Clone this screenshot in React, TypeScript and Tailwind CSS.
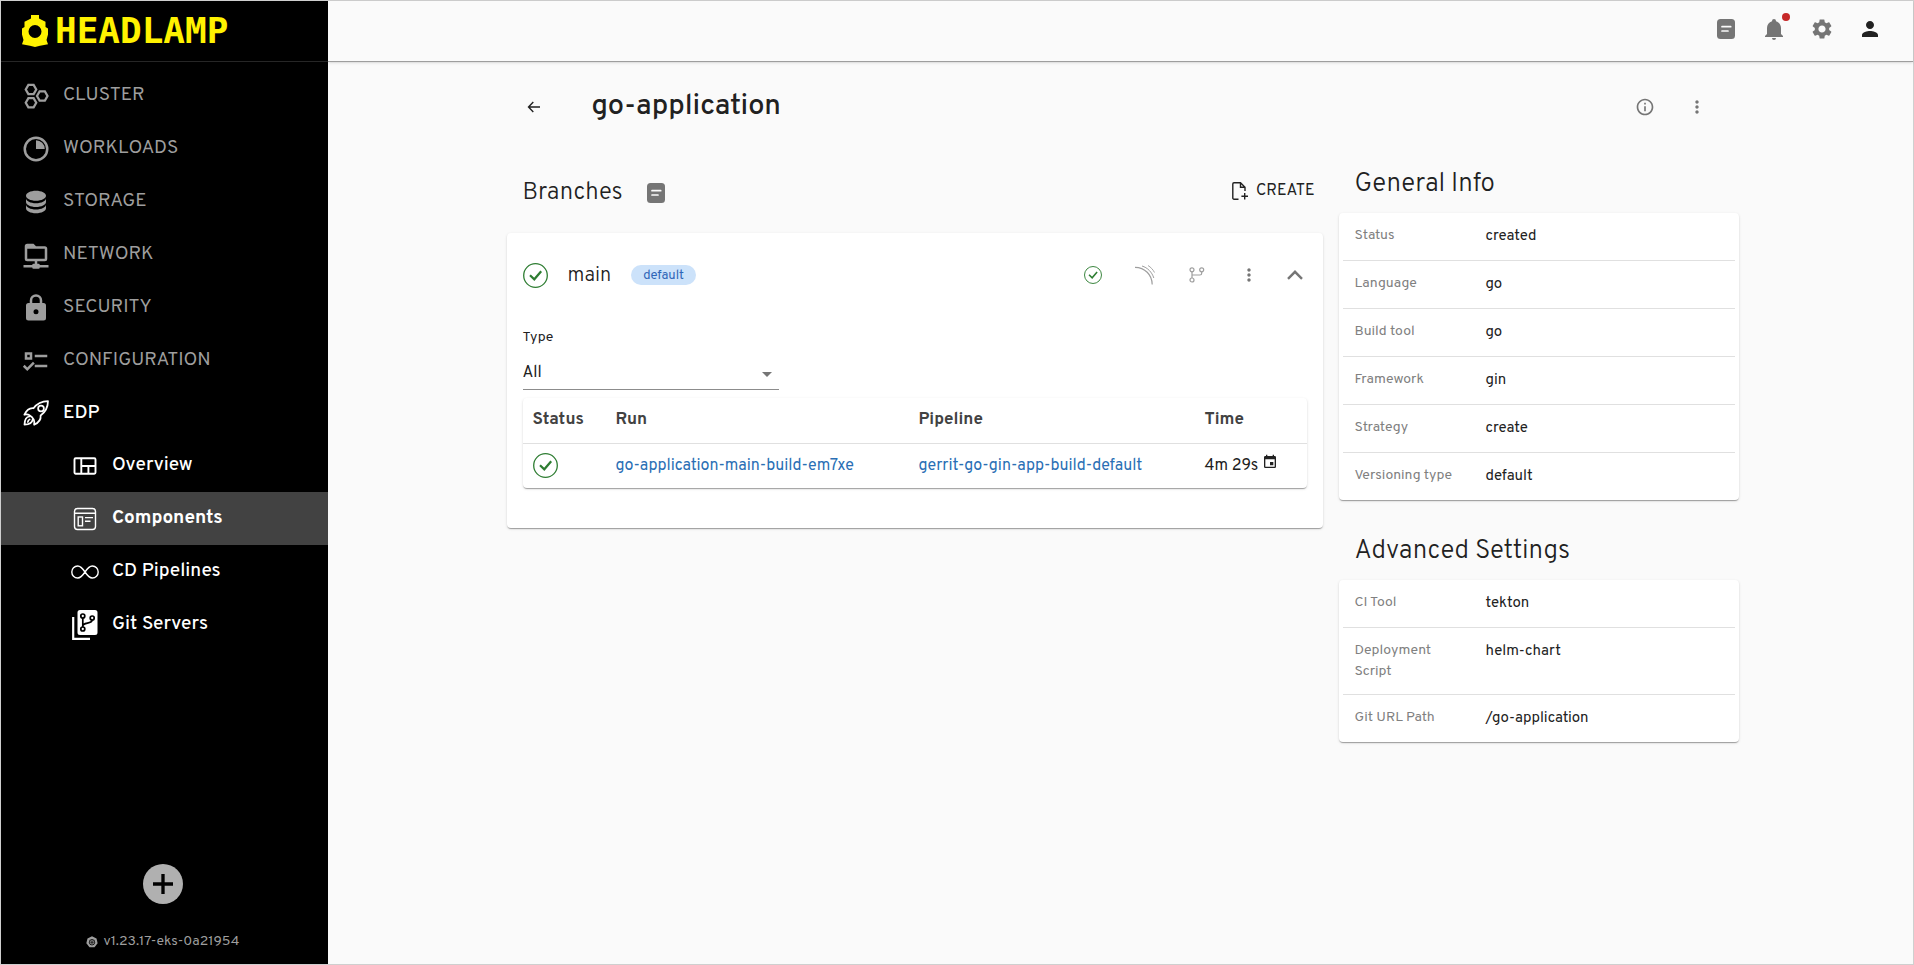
import type { ReactNode, SVGProps } from "react";
import { MdInfoOutline, MdMoreVert, MdPerson, MdSettings } from "react-icons/md";

type IconProps = SVGProps<SVGSVGElement>;

function Svg({ children, ...rest }: IconProps) {
  return (
    <svg viewBox="0 0 24 24" fill="currentColor" aria-hidden="true" {...rest}>
      {children}
    </svg>
  );
}

const HEX = "M-2.1-3.7H2.1L4.2 0 2.1 3.7H-2.1L-4.2 0Z";

const ClusterIcon = (p: IconProps) => (
  <Svg {...p}>
    <g fill="none" stroke="currentColor" strokeWidth="1.8">
      <path d={HEX} transform="translate(8 6.8)" />
      <path d={HEX} transform="translate(17 12)" />
      <path d={HEX} transform="translate(8 17.4)" />
    </g>
  </Svg>
);
const WorkloadsIcon = (p: IconProps) => (
  <Svg {...p}>
    <path d="M12 2A10 10 0 0 0 2 12 10 10 0 0 0 12 22 10 10 0 0 0 22 12 10 10 0 0 0 12 2M12 4a8 8 0 0 1 8 8 8 8 0 0 1-8 8 8 8 0 0 1-8-8 8 8 0 0 1 8-8m0 1v7h7a7 7 0 0 0-7-7z" />
  </Svg>
);
const StorageIcon = (p: IconProps) => (
  <Svg {...p}>
    <path d="M12 3C7.58 3 4 4.79 4 7s3.58 4 8 4 8-1.79 8-4-3.58-4-8-4M4 9v3c0 2.21 3.58 4 8 4s8-1.79 8-4V9c0 2.21-3.58 4-8 4s-8-1.79-8-4m0 5v3c0 2.21 3.58 4 8 4s8-1.79 8-4v-3c0 2.21-3.58 4-8 4s-8-1.79-8-4z" />
  </Svg>
);
const NetworkIcon = (p: IconProps) => (
  <Svg {...p}>
    <path d="M15 20a1 1 0 0 0-1-1h-1v-2h6a2 2 0 0 0 2-2V7a2 2 0 0 0-2-2h-7l-2-2H5a2 2 0 0 0-2 2v10a2 2 0 0 0 2 2h6v2h-1a1 1 0 0 0-1 1H2v2h7a1 1 0 0 0 1 1h4a1 1 0 0 0 1-1h7v-2h-7M5 15V7h14v8H5z" />
  </Svg>
);
const SecurityIcon = (p: IconProps) => (
  <Svg {...p}>
    <path d="M12 17a2 2 0 0 0 2-2 2 2 0 0 0-2-2 2 2 0 0 0-2 2 2 2 0 0 0 2 2m6-9a2 2 0 0 1 2 2v10a2 2 0 0 1-2 2H6a2 2 0 0 1-2-2V10a2 2 0 0 1 2-2h1V6a5 5 0 0 1 5-5 5 5 0 0 1 5 5v2h1m-6-5a3 3 0 0 0-3 3v2h6V6a3 3 0 0 0-3-3z" />
  </Svg>
);
const ConfigurationIcon = (p: IconProps) => (
  <Svg {...p}>
    <path d="M3 5h6v6H3V5m2 2v2h2V7H5m6 0h10v2H11V7m0 8h10v2H11v-2m-6 5-3.5-3.5 1.41-1.41L5 17.17l4.59-4.58L11 14l-6 6z" />
  </Svg>
);
const RocketIcon = (p: IconProps) => (
  <Svg {...p}>
    <g fill="none" stroke="currentColor" strokeWidth="1.4" strokeLinejoin="round" strokeLinecap="round">
      <path d="M21.6 2.5C16 2.6 12.6 4.7 10 8.2c-3-.4-5.2.8-7.3 5.2 1.8-.4 3-.3 4.1.4 1.7.9 2.6 1.9 3.4 3.5.6 1.2.6 2.3.3 4.1 4.2-2 5.6-4.3 5.2-7.4C19.3 11.3 21.5 8 21.6 2.5Z" />
      <circle cx="16" cy="8.3" r="2.3" />
      <path d="M6.8 14.8C3.7 15.1 2.9 17.3 2.8 21.3c4-.1 6.1-.9 6.500-4" />
      <path d="M6.900 17.200c-.9.300-1.300.9-1.400 2" />
    </g>
  </Svg>
);
const OverviewIcon = (p: IconProps) => (
  <Svg {...p}>
    <g fill="none" stroke="currentColor" strokeWidth="1.9">
      <rect x="1.5" y="4.3" width="21" height="15.5" rx="1.2" />
      <path d="M8.3 4.3v15.5M8.3 12h14.2M15.4 12v7.8" />
    </g>
  </Svg>
);
const ComponentsIcon = (p: IconProps) => (
  <Svg {...p}>
    <g fill="none" stroke="currentColor" strokeWidth="1.4">
      <rect x="1.5" y="1.5" width="21" height="21" rx="3" />
      <path d="M1.5 6.2h21M12 10.6h8M12 14.2h5.5" />
      <rect x="5.2" y="10" width="4.3" height="8.8" />
    </g>
  </Svg>
);
const InfinityIcon = (p: IconProps) => (
  <Svg {...p} viewBox="0 0 28 24">
    <path
      d="M14 12c-2.400-3.600-4.400-6-7.300-6C3.300 6 .8 8.600.8 12s2.500 6 5.900 6c2.900 0 4.900-2.400 7.300-6s4.400-6 7.300-6c3.400 0 5.900 2.600 5.900 6s-2.500 6-5.900 6c-2.900 0-4.900-2.400-7.300-6Z"
      fill="none"
      stroke="currentColor"
      strokeWidth="1.4"
    />
  </Svg>
);
const GitServersIcon = (p: IconProps) => (
  <Svg {...p} viewBox="0 0 26 30">
    <path d="M8 0h15a2.500 2.500 0 0 1 2.500 2.500v20A2.500 2.500 0 0 1 23 25H8a2.500 2.500 0 0 1-2.500-2.500v-20A2.500 2.500 0 0 1 8 0Z" />
    <path d="M1.200 7v21.800H18" fill="none" stroke="currentColor" strokeWidth="2.2" />
    <g fill="none" stroke="#000" strokeWidth="1.7">
      <circle cx="10.8" cy="6" r="2" />
      <circle cx="20.2" cy="8" r="2" />
      <circle cx="10.8" cy="19" r="2" />
      <path d="M10.800 8v9M20.200 10c0 4.300-9.400 2-9.400 6" />
    </g>
  </Svg>
);
const NoteIcon = (p: IconProps) => (
  <Svg {...p} viewBox="0 0 18 20">
    <rect width="18" height="20" rx="3.5" />
    <path d="M5 7.700h8.700M5 12h6" stroke="#fafafa" strokeWidth="1.7" strokeLinecap="round" />
  </Svg>
);
const BellIcon = (p: IconProps) => (
  <Svg {...p}>
    <path d="M21 19v1H3v-1l2-2v-6c0-3.1 2.03-5.83 5-6.71V4a2 2 0 0 1 2-2 2 2 0 0 1 2 2v.29c2.97.88 5 3.61 5 6.71v6l2 2m-7 2a2 2 0 0 1-2 2 2 2 0 0 1-2-2" />
  </Svg>
);
const BackIcon = (p: IconProps) => (
  <Svg {...p} viewBox="0 0 14 14">
    <path d="M13 7H1.5M6.3 2 1.5 7l4.800 5" fill="none" stroke="currentColor" strokeWidth="1.4" />
  </Svg>
);
const CreateIcon = (p: IconProps) => (
  <Svg {...p} viewBox="0 0 16 18">
    <path d="M6.500 17.200H2a1.200 1.200 0 0 1-1.200-1.200V2A1.200 1.200 0 0 1 2 .8h6.500L13 5.300V9M8.500.8v4.500H13" fill="none" stroke="currentColor" strokeWidth="1.4" />
    <path d="M12.700 11v6.500M9.400 14.300H16" fill="none" stroke="currentColor" strokeWidth="1.4" />
  </Svg>
);
const SuccessIcon = (p: IconProps) => (
  <Svg {...p} viewBox="0 0 25 25">
    <circle cx="12.5" cy="12.5" r="11.8" fill="none" stroke="currentColor" strokeWidth="1.3" />
    <path d="m7 12.200 4.300 4.100L18.200 8.300" fill="none" stroke="currentColor" strokeWidth="2.2" />
  </Svg>
);
const SonarIcon = (p: IconProps) => (
  <Svg {...p} viewBox="0 0 20 20">
    <g fill="none" stroke="currentColor">
      <path d="M0 2.400C9.800 2.600 17 9.500 17.200 19.500" strokeWidth="1.2" />
      <path d="M7 1c5.500 1.600 10 6.200 11.800 12" strokeWidth="1" />
      <path d="M13 .5c2.800 1.700 5.100 4.200 6.500 7" strokeWidth=".9" />
    </g>
  </Svg>
);
const BranchIcon = (p: IconProps) => (
  <Svg {...p} viewBox="0 0 16 16">
    <g fill="none" stroke="currentColor" strokeWidth="1.2">
      <circle cx="3" cy="2.8" r="2" />
      <circle cx="3" cy="13" r="2" />
      <circle cx="12.7" cy="2.8" r="2" />
      <path d="M3 4.800V11M12.700 4.800v1.400A1.800 1.800 0 0 1 10.900 8H3" />
    </g>
  </Svg>
);
const ChevronUpIcon = (p: IconProps) => (
  <Svg {...p} viewBox="0 0 16 10">
    <path d="m1 8.800 7-7 7 7" fill="none" stroke="currentColor" strokeWidth="2.4" />
  </Svg>
);
const CalendarIcon = (p: IconProps) => (
  <Svg {...p}>
    <path d="M19 19H5V8h14m-3-7v2H8V1H6v2H5a2 2 0 0 0-2 2v14a2 2 0 0 0 2 2h14a2 2 0 0 0 2-2V5a2 2 0 0 0-2-2h-1V1m-1 11h-5v5h5v-5z" />
  </Svg>
);
const LampIcon = (p: IconProps) => (
  <Svg {...p} viewBox="0 0 26 32">
    <path
      fillRule="evenodd"
      d="M9 0h8v3.500l6.500 3.200V12l2.500 1.500v6L24.500 25l1.500 4.300-8 1.500L13 32l-5-1.200-8-1.500L1.500 25 0 19.500v-6L2.500 12V6.700L9 3.500ZM13 10a6.500 6.500 0 1 0 0 13 6.500 6.500 0 0 0 0-13Z"
    />
  </Svg>
);
const KubeIcon = (p: IconProps) => (
  <Svg {...p}>
    <path d="m12 .5 9 4.300 2.300 9.700-6.300 8H7l-6.300-8L3 4.800Z" />
    <circle cx="12" cy="12.5" r="5.5" fill="none" stroke="#000" strokeWidth="1.5" />
    <path d="M12 6v6.500l5-4M12 12.500l6 1.500M12 12.500l3 5.500M12 12.500 9 18M12 12.500 6 14M12 12.500l-5-4" fill="none" stroke="#000" strokeWidth="1" />
  </Svg>
);

const CARD = "rounded bg-white shadow-[0_2px_1px_-1px_rgba(0,0,0,0.2),0_1px_1px_rgba(0,0,0,0.14),0_1px_3px_rgba(0,0,0,0.12)]";

const sections = [
  { label: "CLUSTER", Icon: ClusterIcon },
  { label: "WORKLOADS", Icon: WorkloadsIcon },
  { label: "STORAGE", Icon: StorageIcon },
  { label: "NETWORK", Icon: NetworkIcon },
  { label: "SECURITY", Icon: SecurityIcon },
  { label: "CONFIGURATION", Icon: ConfigurationIcon },
];

const edpLinks = [
  { label: "Overview", Icon: OverviewIcon, size: "size-6" },
  { label: "Components", Icon: ComponentsIcon, size: "size-6", active: true },
  { label: "CD Pipelines", Icon: InfinityIcon, size: "h-6 w-7" },
  { label: "Git Servers", Icon: GitServersIcon, size: "h-[30px] w-[26px]" },
];

const generalInfo: [string, string][] = [
  ["Status", "created"],
  ["Language", "go"],
  ["Build tool", "go"],
  ["Framework", "gin"],
  ["Strategy", "create"],
  ["Versioning type", "default"],
];

const advancedSettings: [string, string][] = [
  ["CI Tool", "tekton"],
  ["Deployment Script", "helm-chart"],
  ["Git URL Path", "/go-application"],
];

function Sidebar() {
  return (
    <aside className="flex w-[327px] shrink-0 flex-col bg-black text-[#9e9e9e]">
      <a href="#home" className="flex h-[61px] items-center gap-[7px] border-b border-[#262626] pl-[21px] text-[#fff200]">
        <LampIcon className="h-8 w-[26px]" />
        <span className="font-['DejaVu_Sans_Mono',monospace] text-4xl font-bold">HEADLAMP</span>
      </a>
      <nav className="pt-[7px] text-[19px]">
        <ul>
          {sections.map(({ label, Icon }) => (
            <li key={label}>
              <a href="#section" className="flex h-[53px] items-center gap-3 pl-5">
                <Icon className="size-[30px]" />
                {label}
              </a>
            </li>
          ))}
          <li>
            <a href="#edp" className="flex h-[52px] items-center gap-3 pl-5 font-medium text-white">
              <RocketIcon className="size-[30px]" />
              EDP
            </a>
            <ul>
              {edpLinks.map(({ label, Icon, size, active }) => (
                <li key={label}>
                  <a
                    href="#edp-page"
                    aria-current={active ? "page" : undefined}
                    className={
                      active
                        ? "flex h-[53px] items-center gap-3 bg-[#424242] pl-[69px] font-bold text-white"
                        : "flex h-[53px] items-center gap-3 pl-[69px] font-medium text-white"
                    }
                  >
                    <span className="flex w-[30px] justify-center">
                      <Icon className={size} />
                    </span>
                    {label}
                  </a>
                </li>
              ))}
            </ul>
          </li>
        </ul>
      </nav>
      <div className="mt-auto flex flex-col items-center gap-7 pb-3 pr-1">
        <button type="button" aria-label="Add cluster" className="flex size-10 items-center justify-center rounded-full bg-[#b0b0b0] text-black">
          <Svg className="size-5">
            <path d="M10 0h4v10h10v4H14v10h-4V14H0v-4h10Z" />
          </Svg>
        </button>
        <p className="flex items-center gap-[6px] text-sm">
          <KubeIcon className="size-3" />
          v1.23.17-eks-0a21954
        </p>
      </div>
    </aside>
  );
}

function IconButton({ label, children }: { label: string; children: ReactNode }) {
  return (
    <button type="button" aria-label={label} className="relative flex size-12 items-center justify-center">
      {children}
    </button>
  );
}

function TopBar() {
  return (
    <header className="flex h-[61px] items-center justify-end border-b border-[#9e9e9e] pb-1 pr-[19px] text-[#757575] shadow-sm">
      <IconButton label="Documentation">
        <NoteIcon className="h-5 w-[18px]" />
      </IconButton>
      <IconButton label="Notifications">
        <BellIcon className="size-6" />
        <span className="absolute right-2 top-2 size-2 rounded-full bg-[#c62828]" />
      </IconButton>
      <IconButton label="Settings">
        <MdSettings className="size-6" />
      </IconButton>
      <IconButton label="Account">
        <MdPerson className="size-6 text-[#212121]" />
      </IconButton>
    </header>
  );
}

function InfoCard({ title, rows }: { title: string; rows: [string, string][] }) {
  return (
    <section>
      <h2 className="flex h-[60px] items-center pl-4 pt-0.5 text-[26px] font-light">{title}</h2>
      <dl className={`${CARD} px-1`}>
        {rows.map(([label, value]) => (
          <div key={label} className="flex border-b border-[#e0e0e0] px-3 py-3 last:border-b-0">
            <dt className="w-[131px] shrink-0 pr-8 text-sm leading-[21px] text-[#808080]">{label}</dt>
            <dd className="text-[15px] leading-[23px]">{value}</dd>
          </div>
        ))}
      </dl>
    </section>
  );
}

function BranchCard() {
  return (
    <article className={`${CARD} px-4 pb-10`}>
      <div className="flex h-[84px] items-center">
        <SuccessIcon className="size-[25px] text-[#2e7d32]" />
        <h3 className="ml-5 pt-0.5 text-xl font-light">main</h3>
        <span className="ml-5 flex h-5 items-center rounded-full bg-[#cce2fa] px-3 pt-1 text-[13px] text-[#2f66b8]">default</span>
        <div className="ml-auto flex items-center text-[#757575]">
          <SuccessIcon className="mr-[33px] size-[18px] text-[#2e7d32]" />
          <SonarIcon className="mr-[34px] size-5 text-[#9e9e9e]" />
          <BranchIcon className="mr-[34px] size-4 text-[#9e9e9e]" />
          <button type="button" aria-label="Branch actions">
            <MdMoreVert className="size-5" />
          </button>
          <button type="button" aria-label="Collapse branch" className="ml-7 mr-1">
            <ChevronUpIcon className="h-[10px] w-4" />
          </button>
        </div>
      </div>
      <div className="flex w-64 flex-col pt-[10px]">
        <label htmlFor="run-type" className="text-sm leading-[22px]">
          Type
        </label>
        <span className="relative mt-[9px] flex">
          <select id="run-type" className="h-8 w-full appearance-none border-b border-[#8c8c8c] bg-transparent pb-0.5 text-base" defaultValue="All">
            <option>All</option>
          </select>
          <svg viewBox="0 0 10 5" className="pointer-events-none absolute right-[7px] top-[14px] h-[5px] w-[10px] fill-[#757575]" aria-hidden="true">
            <path d="M0 0h10L5 5Z" />
          </svg>
        </span>
      </div>
      <div className={`${CARD} mt-2`}>
        <table className="w-full table-fixed text-left">
          <thead className="text-[17px] text-[#424242]">
            <tr className="h-[45px] border-b border-[#e0e0e0]">
              <th className="w-[83px] px-[10px] font-bold">Status</th>
              <th className="px-[10px] font-bold">Run</th>
              <th className="w-[286px] px-[10px] font-bold">Pipeline</th>
              <th className="w-[112px] px-[10px] font-bold">Time</th>
            </tr>
          </thead>
          <tbody className="text-base">
            <tr className="h-[45px]">
              <td className="px-[10px]">
                <SuccessIcon className="size-[25px] text-[#2e7d32]" />
              </td>
              <td className="px-[10px] text-[#2a6fb5]">
                <a href="#run">go-application-main-build-em7xe</a>
              </td>
              <td className="px-[10px] text-[#2a6fb5]">
                <a href="#pipeline">gerrit-go-gin-app-build-default</a>
              </td>
              <td className="px-[10px]">
                <span className="flex gap-1 whitespace-nowrap">
                  4m 29s
                  <CalendarIcon className="size-4" />
                </span>
              </td>
            </tr>
          </tbody>
        </table>
      </div>
    </article>
  );
}

export default function App() {
  return (
    <div className="flex min-h-screen border border-[#cfcfcf] bg-[#fafafa] font-[Overpass,Roboto,sans-serif] text-[#212121]">
      <Sidebar />
      <div className="min-w-0 flex-1">
        <TopBar />
        <main className="mx-auto max-w-[1236px] pl-1">
          <div className="flex h-[91px] items-center pb-0.5">
            <button type="button" aria-label="Back" className="ml-5">
              <BackIcon className="size-[14px]" />
            </button>
            <h1 className="ml-[51px] text-[29px] font-medium">go-application</h1>
            <div className="ml-auto mr-8 flex items-center gap-8 text-[#757575]">
              <button type="button" aria-label="Details">
                <MdInfoOutline className="size-5" />
              </button>
              <button type="button" aria-label="More actions">
                <MdMoreVert className="size-5" />
              </button>
            </div>
          </div>
          <div className="grid grid-cols-[minmax(0,1fr)_400px] items-start gap-4">
            <section>
              <div className="flex h-20 items-center pl-4 pr-2">
                <h2 className="text-2xl font-light">Branches</h2>
                <NoteIcon className="ml-6 h-5 w-[18px] text-[#757575]" />
                <button type="button" className="mb-1 ml-auto flex items-center gap-2 text-base">
                  <CreateIcon className="h-[18px] w-4" />
                  CREATE
                </button>
              </div>
              <BranchCard />
            </section>
            <div className="flex flex-col gap-5">
              <InfoCard title="General Info" rows={generalInfo} />
              <InfoCard title="Advanced Settings" rows={advancedSettings} />
            </div>
          </div>
        </main>
      </div>
    </div>
  );
}
